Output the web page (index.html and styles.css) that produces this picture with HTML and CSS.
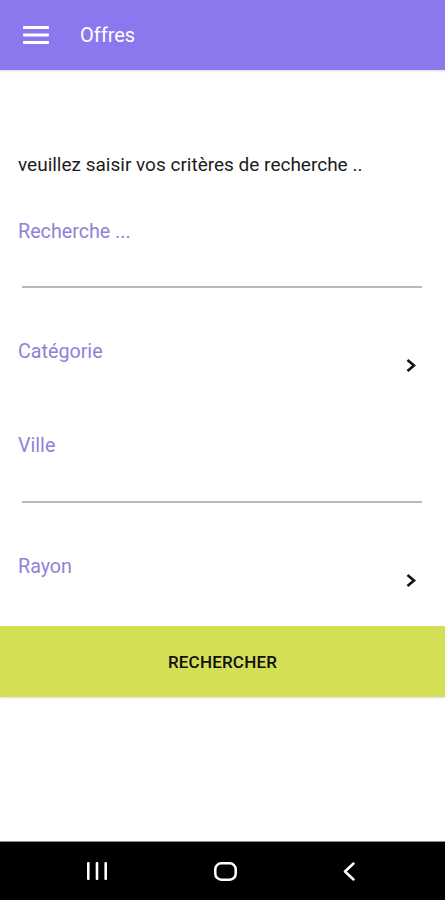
FILE: index.html
```html
<!DOCTYPE html>
<html>
<head>
    <title>Offres</title>
    <link rel="stylesheet" href="styles.css">
</head>
<body>
    <div class="appbar">
        <svg class="menu" width="26" height="18" viewBox="0 0 26 18">
            <rect x="0" y="0" width="26" height="3" rx="1" fill="#fff"/>
            <rect x="0" y="7.5" width="26" height="3" rx="1" fill="#fff"/>
            <rect x="0" y="15" width="26" height="3" rx="1" fill="#fff"/>
        </svg>
        <span class="title">Offres</span>
    </div>

    <div class="content">
        <p class="intro">veuillez saisir vos critères de recherche ..</p>

        <div class="field">
            <span class="label">Recherche ...</span>
            <div class="line"></div>
        </div>

        <div class="picker">
            <span class="label">Catégorie</span>
            <svg class="chevron" width="12" height="15" viewBox="0 0 12 15">
                <polyline points="2.5,2 9,7.5 2.5,13" fill="none" stroke="#111" stroke-width="2.6"/>
            </svg>
        </div>

        <div class="field field-ville">
            <span class="label">Ville</span>
            <div class="line line-ville"></div>
        </div>

        <div class="picker">
            <span class="label">Rayon</span>
            <svg class="chevron" width="12" height="15" viewBox="0 0 12 15">
                <polyline points="2.5,2 9,7.5 2.5,13" fill="none" stroke="#111" stroke-width="2.6"/>
            </svg>
        </div>

        <button class="search-btn">RECHERCHER</button>
    </div>

    <div class="navbar">
        <svg width="22" height="18" viewBox="0 0 22 18">
            <rect x="1" y="0" width="2.6" height="18" rx="1" fill="#fff"/>
            <rect x="9.7" y="0" width="2.6" height="18" rx="1" fill="#fff"/>
            <rect x="18.4" y="0" width="2.6" height="18" rx="1" fill="#fff"/>
        </svg>
        <svg width="23" height="19" viewBox="0 0 23 19">
            <rect x="1.3" y="1.3" width="20.4" height="16.4" rx="6" fill="none" stroke="#fff" stroke-width="2.5"/>
        </svg>
        <svg width="14" height="19" viewBox="0 0 14 19">
            <polyline points="11.5,1.5 3,9.5 11.5,17.5" fill="none" stroke="#fff" stroke-width="2.5" stroke-linecap="round" stroke-linejoin="round"/>
        </svg>
    </div>
</body>
</html>
```

FILE: styles.css
```css
body {
    margin: 0;
    height: 900px;
    display: flex;
    flex-direction: column;
    font-family: Roboto, "Liberation Sans", sans-serif;
    background-color: #fff;
}
.appbar {
    height: 70px;
    flex-shrink: 0;
    background-color: #8b78ef;
    display: flex;
    align-items: center;
    padding-left: 23px;
    box-shadow: 0 1px 2px rgba(0, 0, 0, 0.15);
}
.menu {
    margin-top: -1px;
}
.title {
    color: #fff;
    font-size: 20px;
    margin-left: 31px;
    margin-top: -1px;
}
.content {
    flex: 1;
    display: flex;
    flex-direction: column;
}
.intro {
    margin: 83px 0 0 18px;
    font-size: 19px;
    line-height: 24px;
    color: #1c1c1c;
}
.label {
    font-size: 19.7px;
    line-height: 24px;
    color: #8f82d9;
}
.field {
    display: flex;
    flex-direction: column;
    padding-left: 18px;
    margin-top: 43px;
}
.line {
    height: 2px;
    background-color: #b8b8b8;
    margin: 42px 23px 0 4px;
}
.field-ville {
    margin-top: 61px;
}
.line-ville {
    margin-top: 43px;
}
.picker {
    display: flex;
    justify-content: space-between;
    align-items: flex-start;
    padding: 0 28px 0 18px;
    margin-top: 52px;
}
.chevron {
    margin-top: 18px;
}
.search-btn {
    margin-top: 38px;
    height: 71px;
    border: none;
    background-color: #d4df55;
    font-family: Roboto, "Liberation Sans", sans-serif;
    font-size: 17px;
    font-weight: 500;
    color: #111;
    letter-spacing: 0.2px;
    box-shadow: 0 1px 2px rgba(0, 0, 0, 0.15);
}
.navbar {
    height: 58px;
    flex-shrink: 0;
    background-color: #000;
    border-top: 1px solid #8a8a8a;
    display: flex;
    align-items: center;
    justify-content: space-between;
    padding: 0 89px 0 86px;
}
```
